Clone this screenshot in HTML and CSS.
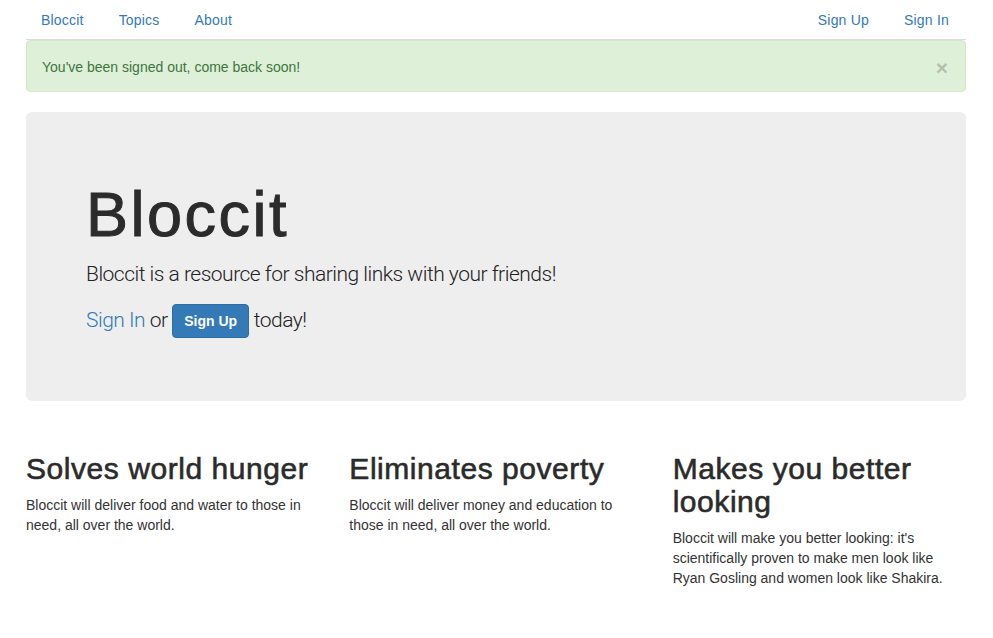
FILE: index.html
```html
<!DOCTYPE html>
<html>
<head>
<meta charset="utf-8">
<title>Bloccit</title>
<link rel="stylesheet" href="styles.css">
</head>
<body>
<div class="container">
  <nav class="nav-tabs">
    <ul class="nav-group">
      <li><a href="#">Bloccit</a></li>
      <li><a href="#">Topics</a></li>
      <li><a href="#">About</a></li>
    </ul>
    <ul class="nav-group nav-right">
      <li><a href="#">Sign Up</a></li>
      <li><a href="#">Sign In</a></li>
    </ul>
  </nav>

  <div class="alert">
    <span>You've been signed out, come back soon!</span>
    <button class="close" type="button">&times;</button>
  </div>

  <div class="jumbotron">
    <h1>Bloccit</h1>
    <p class="lead">Bloccit is a resource for sharing links with your friends!</p>
    <p class="lead"><a href="#">Sign In</a> or <a class="btn" href="#">Sign Up</a> today!</p>
  </div>

  <div class="row">
    <div class="col">
      <h2>Solves world hunger</h2>
      <p>Bloccit will deliver food and water to those in need, all over the world.</p>
    </div>
    <div class="col">
      <h2>Eliminates poverty</h2>
      <p>Bloccit will deliver money and education to those in need, all over the world.</p>
    </div>
    <div class="col">
      <h2>Makes you better looking</h2>
      <p>Bloccit will make you better looking: it's scientifically proven to make men look like Ryan Gosling and women look like Shakira.</p>
    </div>
  </div>
</div>
</body>
</html>
```

FILE: styles.css
```css
* { box-sizing: border-box; }
html, body { margin: 0; padding: 0; }
body {
  font-family: "Liberation Sans", Arial, sans-serif;
  font-size: 14px;
  line-height: 20px;
  color: #333;
  background: #fff;
}
a { color: #337ab7; text-decoration: none; }

.container {
  width: 970px;
  margin: 0 11px;
  padding: 0 15px;
}

.nav-tabs {
  display: flex;
  border-bottom: 1px solid #ddd;
}
.nav-group {
  display: flex;
  list-style: none;
  margin: 0;
  padding: 0;
  gap: 5px;
}
.nav-right { margin-left: auto; margin-right: 2px; }
.nav-group a {
  display: block;
  padding: 10px 15px 9px;
  line-height: 20px;
  letter-spacing: 0.2px;
}

.alert {
  display: flex;
  align-items: center;
  padding: 15px 17px 14px 15px;
  margin-bottom: 20px;
  border: 1px solid #d6e9c6;
  border-radius: 4px;
  background: #dff0d8;
  color: #3c763d;
}
.alert span { flex: 1; }
.close {
  border: 0;
  background: none;
  padding: 0;
  font-family: "Liberation Sans", Arial, sans-serif;
  font-size: 21px;
  font-weight: bold;
  line-height: 1;
  color: #000;
  opacity: .2;
  position: relative;
  top: 1px;
}

.jumbotron {
  background: #eee;
  border-radius: 6px;
  padding: 48px 60px 48px;
  margin-bottom: 30px;
}
.jumbotron h1 {
  font-size: 63px;
  font-weight: 400;
  line-height: 1.1;
  margin: 20px 0 10px 0;
  color: #2b2b2b;
  letter-spacing: 2.5px;
  -webkit-text-stroke: 1px #2b2b2b;
}
.lead {
  font-family: Roboto, "Liberation Sans", sans-serif;
  font-size: 21px;
  font-weight: 300;
  line-height: 30px;
  margin: 0 0 15px;
  color: #222;
  letter-spacing: -0.5px;
}
.btn {
  display: inline-block;
  vertical-align: middle;
  font-family: "Liberation Sans", Arial, sans-serif;
  font-size: 14px;
  font-weight: bold;
  line-height: 20px;
  letter-spacing: 0;
  padding: 6px 11px;
  color: #fff;
  background: #337ab7;
  border: 1px solid #2e6da4;
  border-radius: 4px;
}

.row {
  display: flex;
  margin: 0 -15px;
}
.col {
  width: 33.3333%;
  padding: 0 15px;
}
.col h2 {
  font-size: 30px;
  font-weight: 400;
  line-height: 33px;
  margin: 21px 0 10px;
  color: #2b2b2b;
  letter-spacing: 0.55px;
  -webkit-text-stroke: 0.6px #2b2b2b;
}
.col p { margin: 0 0 10px; }
```
